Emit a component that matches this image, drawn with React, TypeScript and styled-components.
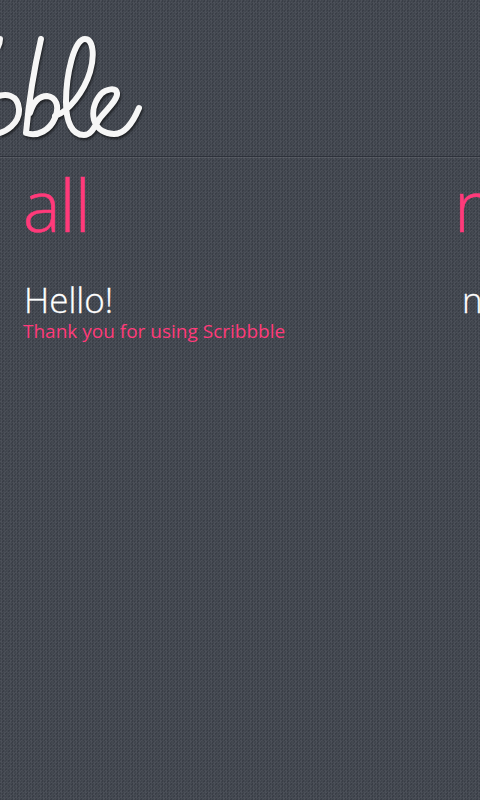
import React, { FC } from "react";
import styled, { createGlobalStyle } from "styled-components";

const GlobalStyle = createGlobalStyle`
  html, body {
    margin: 0;
    padding: 0;
    background: #41464f;
  }
`;

const Page = styled.div`
  width: 480px;
  height: 800px;
  overflow: hidden;
  display: flex;
  flex-direction: column;
  font-family: "Open Sans", "Noto Sans", sans-serif;
  background-color: #41464f;
  background-image: conic-gradient(
      rgba(255, 255, 255, 0.035) 25%,
      rgba(0, 0, 0, 0.07) 0 50%,
      rgba(255, 255, 255, 0.035) 0 75%,
      rgba(0, 0, 0, 0.07) 0
    ),
    conic-gradient(
      rgba(0, 0, 0, 0.04) 25%,
      rgba(255, 255, 255, 0.025) 0 50%,
      rgba(0, 0, 0, 0.04) 0 75%,
      rgba(255, 255, 255, 0.025) 0
    );
  background-size: 3px 3px, 5px 5px;
`;

const Header = styled.header`
  height: 156px;
  flex: none;
  border-bottom: 1px solid #2e323b;
  box-shadow: 0 1px 0 rgba(255, 255, 255, 0.1);
`;

const LogoSvg = styled.svg`
  display: block;
  filter: drop-shadow(1px 2px 1px rgba(0, 0, 0, 0.55));
`;

const Pivot = styled.main`
  display: flex;
  flex: 1;
  padding-left: 23px;
  overflow: hidden;
`;

const Column = styled.section`
  flex: none;
  width: 431px;
`;

const Title = styled.h1`
  margin: 0;
  font-size: 71px;
  font-weight: 300;
  line-height: 96px;
  letter-spacing: -1px;
  color: #ff3a7a;
  -webkit-text-stroke: 0.6px #ff3a7a;
`;

const Note = styled.article<{ $indent?: boolean }>`
  margin-top: 27px;
  padding-left: ${({ $indent }) => ($indent ? "7px" : "0")};
`;

const NoteTitle = styled.h2`
  margin: 0 0 0 1px;
  font-size: 35px;
  font-weight: 300;
  line-height: 40px;
  color: #fff;
  -webkit-text-stroke: 0.3px #fff;
`;

const NoteText = styled.p`
  margin: 1px 0 0;
  font-size: 19px;
  font-weight: 400;
  line-height: 20px;
  white-space: nowrap;
  color: #ff3a7a;
`;

const Logo: FC = () => (
  <LogoSvg width="160" height="156" viewBox="0 0 160 156" fill="none" aria-label="Scribbble">
    <g stroke="#f6f6f6" strokeWidth="6" strokeLinecap="round" strokeLinejoin="round">
      <path d="M-4 50C-1 46 0 43 0 39" />
      <path d="M-6 98C6 92 18 95 19 109C20 123 6 133 -6 134" />
      <path d="M41 39C35 65 29 100 26 133C38 137 50 130 55 118C60 106 56 97 47 96C38 96 33 103 30 113" />
      <path d="M55 116C68 112 84 92 90 72C95 55 93 39 85 39C74 39 66 75 66 102C66 122 72 135 84 135C92 135 95 125 100 118C106 110 118 100 117 93C116 87 106 89 101 94C94 102 92 112 94 120C97 130 106 134 114 134C126 134 134 120 139 108" />
    </g>
  </LogoSvg>
);

const App: FC = () => (
  <>
    <GlobalStyle />
    <Page>
      <Header>
        <Logo />
      </Header>
      <Pivot>
        <Column>
          <Title>all</Title>
          <Note>
            <NoteTitle>Hello!</NoteTitle>
            <NoteText>Thank you for using Scribbble</NoteText>
          </Note>
        </Column>
        <Column>
          <Title>new</Title>
          <Note $indent>
            <NoteTitle>new</NoteTitle>
          </Note>
        </Column>
      </Pivot>
    </Page>
  </>
);

export default App;
